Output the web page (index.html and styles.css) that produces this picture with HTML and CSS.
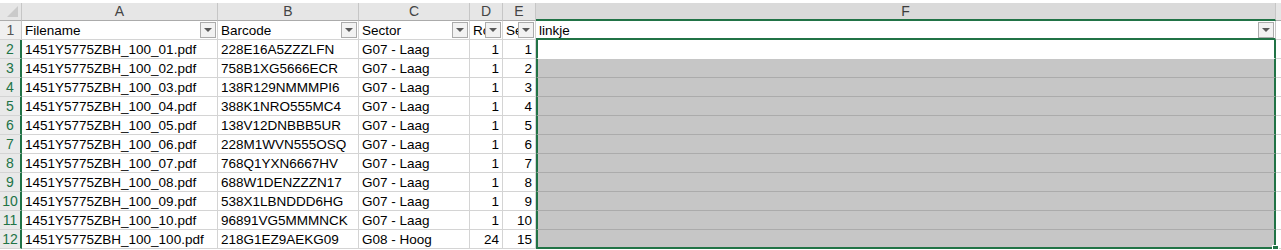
FILE: index.html
```html
<!DOCTYPE html>
<html lang="nl">
  <head>
    <meta charset="UTF-8" />
    <title>Bestanden - Blad1</title>
    <link rel="stylesheet" href="styles.css">
  </head>
  <body>
    <div class="sheet">
      <!-- Column headers -->
      <div class="corner"></div>
      <div class="col-head">A</div>
      <div class="col-head">B</div>
      <div class="col-head">C</div>
      <div class="col-head">D</div>
      <div class="col-head">E</div>
      <div class="col-head col-head-active">F</div>
      <div class="col-head col-head-rest"></div>

      <!-- Row 1: table headers with filter buttons -->
      <div class="row-head">1</div>
      <div class="cell head-cell"><span class="label">Filename</span><span class="filter"></span></div>
      <div class="cell head-cell"><span class="label">Barcode</span><span class="filter"></span></div>
      <div class="cell head-cell"><span class="label">Sector</span><span class="filter"></span></div>
      <div class="cell head-cell"><span class="label">Ro</span><span class="filter"></span></div>
      <div class="cell head-cell"><span class="label">Se</span><span class="filter"></span></div>
      <div class="cell head-cell head-cell-active"><span class="label">linkje</span><span class="filter"></span></div>
      <div class="cell"></div>

      <div class="row-head row-head-sel">2</div>
      <div class="cell">1451Y5775ZBH_100_01.pdf</div>
      <div class="cell">228E16A5ZZZLFN</div>
      <div class="cell">G07 - Laag</div>
      <div class="cell num">1</div>
      <div class="cell num">1</div>
      <div class="cell active"></div>
      <div class="cell"></div>

      <div class="row-head row-head-sel">3</div>
      <div class="cell">1451Y5775ZBH_100_02.pdf</div>
      <div class="cell">758B1XG5666ECR</div>
      <div class="cell">G07 - Laag</div>
      <div class="cell num">1</div>
      <div class="cell num">2</div>
      <div class="cell selected"></div>
      <div class="cell"></div>

      <div class="row-head row-head-sel">4</div>
      <div class="cell">1451Y5775ZBH_100_03.pdf</div>
      <div class="cell">138R129NMMMPI6</div>
      <div class="cell">G07 - Laag</div>
      <div class="cell num">1</div>
      <div class="cell num">3</div>
      <div class="cell selected"></div>
      <div class="cell"></div>

      <div class="row-head row-head-sel">5</div>
      <div class="cell">1451Y5775ZBH_100_04.pdf</div>
      <div class="cell">388K1NRO555MC4</div>
      <div class="cell">G07 - Laag</div>
      <div class="cell num">1</div>
      <div class="cell num">4</div>
      <div class="cell selected"></div>
      <div class="cell"></div>

      <div class="row-head row-head-sel">6</div>
      <div class="cell">1451Y5775ZBH_100_05.pdf</div>
      <div class="cell">138V12DNBBB5UR</div>
      <div class="cell">G07 - Laag</div>
      <div class="cell num">1</div>
      <div class="cell num">5</div>
      <div class="cell selected"></div>
      <div class="cell"></div>

      <div class="row-head row-head-sel">7</div>
      <div class="cell">1451Y5775ZBH_100_06.pdf</div>
      <div class="cell">228M1WVN555OSQ</div>
      <div class="cell">G07 - Laag</div>
      <div class="cell num">1</div>
      <div class="cell num">6</div>
      <div class="cell selected"></div>
      <div class="cell"></div>

      <div class="row-head row-head-sel">8</div>
      <div class="cell">1451Y5775ZBH_100_07.pdf</div>
      <div class="cell">768Q1YXN6667HV</div>
      <div class="cell">G07 - Laag</div>
      <div class="cell num">1</div>
      <div class="cell num">7</div>
      <div class="cell selected"></div>
      <div class="cell"></div>

      <div class="row-head row-head-sel">9</div>
      <div class="cell">1451Y5775ZBH_100_08.pdf</div>
      <div class="cell">688W1DENZZZN17</div>
      <div class="cell">G07 - Laag</div>
      <div class="cell num">1</div>
      <div class="cell num">8</div>
      <div class="cell selected"></div>
      <div class="cell"></div>

      <div class="row-head row-head-sel">10</div>
      <div class="cell">1451Y5775ZBH_100_09.pdf</div>
      <div class="cell">538X1LBNDDD6HG</div>
      <div class="cell">G07 - Laag</div>
      <div class="cell num">1</div>
      <div class="cell num">9</div>
      <div class="cell selected"></div>
      <div class="cell"></div>

      <div class="row-head row-head-sel">11</div>
      <div class="cell">1451Y5775ZBH_100_10.pdf</div>
      <div class="cell">96891VG5MMMNCK</div>
      <div class="cell">G07 - Laag</div>
      <div class="cell num">1</div>
      <div class="cell num">10</div>
      <div class="cell selected"></div>
      <div class="cell"></div>

      <div class="row-head row-head-sel">12</div>
      <div class="cell">1451Y5775ZBH_100_100.pdf</div>
      <div class="cell">218G1EZ9AEKG09</div>
      <div class="cell">G08 - Hoog</div>
      <div class="cell num">24</div>
      <div class="cell num">15</div>
      <div class="cell selected selected-last"></div>
      <div class="cell"></div>
    </div>
  </body>
</html>
```

FILE: styles.css
```css
/* General */
body {
  margin: 0;
  background: #ffffff;
  font-family: "Liberation Sans", Arial, sans-serif;
  font-size: 13.5px;
  color: #000000;
  overflow: hidden;
}

/* Sheet grid */
.sheet {
  display: grid;
  grid-template-columns: 22px 196px 141px 111px 33px 33px 740px 1fr;
  grid-template-rows: 18px repeat(12, 19px);
  padding-top: 3px;
}

.sheet > div {
  box-sizing: border-box;
  min-width: 0;
}

/* Headers */
.corner {
  background: #e6e6e6;
  border-right: 1px solid #c6c6c6;
  border-bottom: 1px solid #ababab;
  position: relative;
}

.corner::after {
  content: "";
  position: absolute;
  right: 3px;
  bottom: 3px;
  border-style: solid;
  border-width: 0 0 11px 11px;
  border-color: transparent transparent #cacaca transparent;
}

.col-head {
  background: #e6e6e6;
  color: #444444;
  font-size: 14px;
  text-align: center;
  line-height: 17px;
  border-right: 1px solid #c6c6c6;
  border-bottom: 1px solid #ababab;
}

.col-head-active {
  background: #dadada;
  color: #3c3c3c;
  border-bottom: 2px solid #217346;
}

.col-head-rest {
  border-right: none;
}

.row-head {
  background: #f0f0f0;
  color: #555555;
  font-size: 14px;
  text-align: center;
  line-height: 17px;
  padding-top: 1px;
  border-right: 1px solid #c6c6c6;
  border-bottom: 1px solid #d4d4d4;
}

.row-head-sel {
  background: #e9e9e9;
  color: #217346;
  border-right: 2px solid #217346;
}

/* Cells */
.cell {
  padding: 1px 3px 0;
  line-height: 17px;
  white-space: nowrap;
  overflow: hidden;
  border-right: 1px solid #d4d4d4;
  border-bottom: 1px solid #d4d4d4;
}

.num {
  text-align: right;
}

.head-cell {
  display: flex;
  align-items: center;
  padding: 0 1px 0 3px;
}

.head-cell .label {
  flex: 1;
  min-width: 0;
  overflow: hidden;
  padding-top: 1px;
}

.head-cell-active {
  border-bottom: 2px solid #217346;
  border-right-color: #c6c6c6;
}

/* Autofilter dropdown button */
.filter {
  flex: none;
  width: 16px;
  height: 16px;
  box-sizing: border-box;
  border: 1px solid #ababab;
  background: #f2f2f2;
  display: flex;
  align-items: center;
  justify-content: center;
}

.filter::before {
  content: "";
  border-style: solid;
  border-width: 4px 4px 0 4px;
  border-color: #595959 transparent transparent transparent;
}

/* Selected range F2:F12 */
.active {
  background: #ffffff;
  border-left: 2px solid #217346;
  border-right: 2px solid #217346;
  border-bottom-color: #ffffff;
}

.selected {
  background: #c6c6c6;
  border-left: 2px solid #217346;
  border-right: 2px solid #217346;
  border-bottom-color: #ababab;
}

.selected-last {
  border-bottom: 2px solid #217346;
  overflow: visible;
  position: relative;
}

/* Fill handle */
.selected-last::after {
  content: "";
  position: absolute;
  right: -5px;
  bottom: -5px;
  width: 5px;
  height: 5px;
  background: #217346;
  border: 1px solid #ffffff;
}
```
